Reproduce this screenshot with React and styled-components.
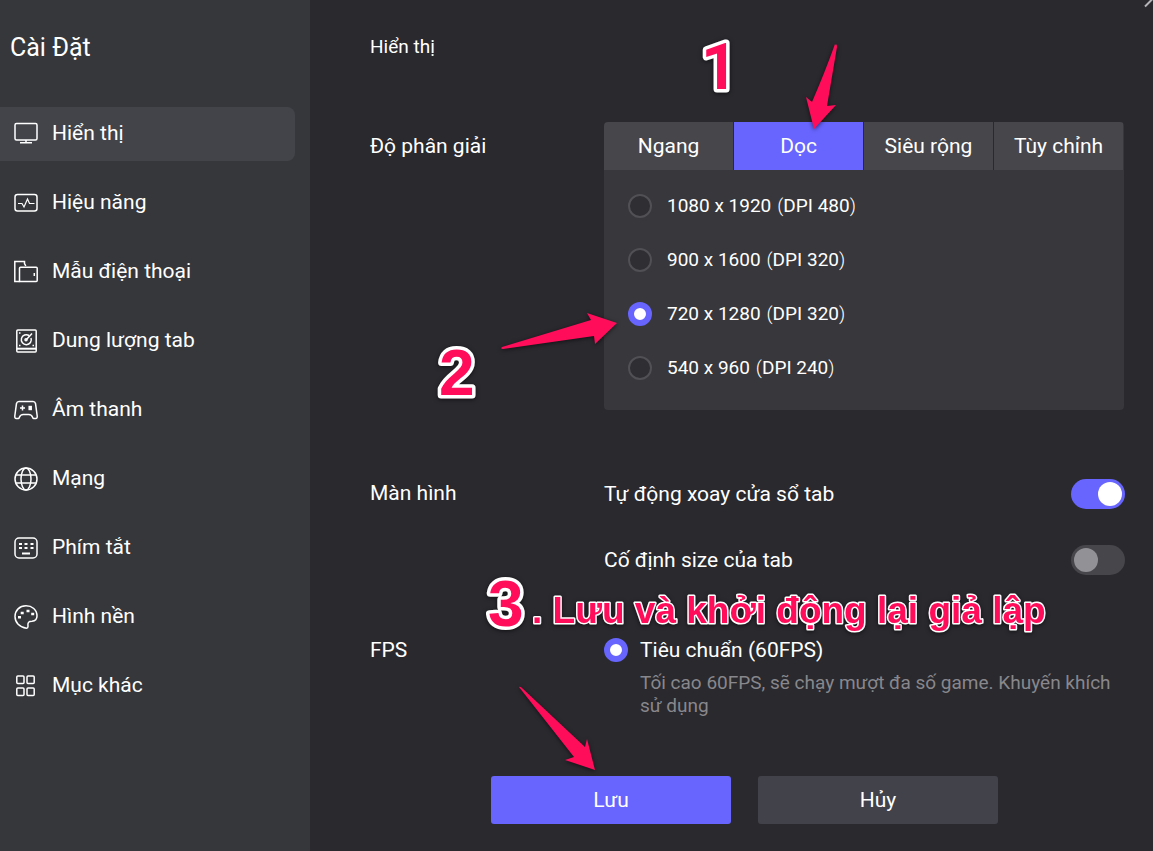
import React, { useState } from "react"
import styled, { createGlobalStyle } from "styled-components"

const GlobalStyle = createGlobalStyle`
  * {
    box-sizing: border-box;
  }

  body {
    margin: 0;
    background: #2a292e;
    color: #fff;
    font-family: Roboto, "Noto Sans", sans-serif;
    font-size: 21px;
    line-height: 24px;
  }

  h1, h2, h3, p, fieldset {
    margin: 0;
    padding: 0;
    border: 0;
    font-weight: 400;
  }

  button, input {
    font: inherit;
    color: inherit;
    margin: 0;
  }
`

const Window = styled.div`
  position: relative;
  display: flex;
  min-height: 100vh;
`

const Sidebar = styled.aside`
  flex: none;
  width: 310px;
  padding-top: 33px;
  background: #36373b;
`

const Title = styled.h1`
  padding-left: 10px;
  margin-bottom: 44px;
  font-size: 25px;
  line-height: 30px;
`

const Menu = styled.nav`
  display: flex;
  flex-direction: column;
  gap: 15px;
  padding-right: 15px;
`

const MenuItem = styled.a`
  display: flex;
  align-items: center;
  gap: 14px;
  height: 54px;
  padding: 0 14px 2px;
  border-radius: 0 8px 8px 0;
  background: ${({ $active }) => ($active ? "#434449" : "transparent")};
  color: #fff;
  text-decoration: none;
`

const Icon = styled.svg`
  flex: none;
  width: 24px;
  height: 24px;
  margin-top: 2px;
  fill: none;
  stroke: #fff;
  stroke-width: 1.5;
`

const Main = styled.main`
  flex: 1;
  min-width: 0;
  padding: 35px 28px 27px 60px;
`

const Heading = styled.h2`
  margin-bottom: 63px;
  font-size: 19px;
`

const Section = styled.section`
  display: grid;
  grid-template-columns: 234px 1fr;
  margin-bottom: ${({ $gap }) => $gap}px;
`

const SectionTitle = styled.h3`
  padding-top: ${({ $top }) => $top || 0}px;
  font-size: 21px;
`

const Panel = styled.div`
  height: 288px;
  margin-right: 1px;
  border-radius: 4px;
  background: #38373b;
  overflow: hidden;
`

const Tabs = styled.div`
  display: grid;
  grid-template-columns: repeat(4, 1fr);
  gap: 1px;
  margin-right: 1px;
  background: #2a292e;
`

const Tab = styled.button`
  height: 48px;
  padding: 0;
  border: 0;
  background: ${({ $active }) => ($active ? "#6765fe" : "#47464b")};
`

const RadioList = styled.fieldset`
  display: flex;
  flex-direction: column;
  gap: 30px;
  padding: 24px;
`

const RadioLabel = styled.label`
  display: flex;
  align-items: center;
  gap: ${({ $gap }) => $gap}px;
`

const Radio = styled.input`
  appearance: none;
  flex: none;
  width: 24px;
  height: 24px;
  border: 2px solid #515055;
  border-radius: 50%;
  background: #2f2e33;

  &:checked {
    border: 6px solid #6765fe;
    background: #fff;
  }
`

const Resolution = styled.span`
  font-size: 19px;
`

const Paren = styled.span`
  display: inline-block;
  width: 12px;
  font-weight: 300;
  text-align: ${({ $align }) => $align};
`

const SwitchList = styled.div`
  display: flex;
  flex-direction: column;
  gap: 36px;
`

const SwitchRow = styled.label`
  display: flex;
  align-items: center;
  justify-content: space-between;
`

const Switch = styled.input`
  appearance: none;
  flex: none;
  display: flex;
  width: 54px;
  height: 30px;
  padding: 3px;
  border-radius: 15px;
  background: #47464b;

  &::before {
    content: "";
    width: 24px;
    height: 24px;
    border-radius: 50%;
    background: #929196;
  }

  &:checked {
    justify-content: flex-end;
    background: #6765fe;
  }

  &:checked::before {
    background: #fff;
  }
`

const Hint = styled.p`
  padding: 9px 0 0 36px;
  color: #88878c;
  font-size: 19px;
  line-height: 23px;
`

const Actions = styled.div`
  display: flex;
  justify-content: center;
  gap: 27px;
  padding-right: 6px;
`

const Button = styled.button`
  width: 240px;
  height: 48px;
  padding: 0;
  border: 0;
  border-radius: 3px;
  background: ${({ $primary }) => ($primary ? "#6765fe" : "#42424a")};
`

const CloseMark = styled.svg`
  position: absolute;
  top: 0;
  right: 0;
  stroke: #b5b4b8;
  stroke-width: 2;
`

const Annotations = styled.svg`
  position: absolute;
  top: 0;
  left: 0;
  pointer-events: none;
  fill: #ff0d5b;
  filter: drop-shadow(0 1px 2px rgba(0, 0, 0, 0.6));
`

const Note = styled.text`
  font-family: ${({ $font }) => $font || '"Liberation Sans"'}, Arial, sans-serif;
  font-size: ${({ $small }) => ($small ? 37 : 64)}px;
  font-weight: 700;
  paint-order: stroke fill;
  stroke: #fff;
  stroke-width: ${({ $small }) => ($small ? 3 : 7)}px;
  stroke-linejoin: round;
`

const icons = {
  display: (
    <>
      <rect x="1" y="1.5" width="22" height="16.5" rx="1.5" />
      <path d="M12 18v3M6 20.8h12" />
    </>
  ),
  performance: (
    <>
      <rect x="1" y="3.5" width="22" height="16.5" rx="2.5" />
      <path d="M4 12.5h4l2 3.5 3.5-8 2 4.5h5" strokeWidth="1.2" />
    </>
  ),
  phone: (
    <>
      <path d="M5.5 21.5H.8V1.500h9.700v2l1.300 2.500" />
      <path d="M5.500 21.500V8.200q0-1 1-1h15.700q1 0 1 1v12.300q0 1-1 1zM20.300 13v3" />
    </>
  ),
  disk: (
    <>
      <rect x="2.8" y="1" width="19.4" height="22" rx="1" />
      <path d="M3 19.7h19" strokeWidth="2" />
      <path d="M12 11l6-6.500M15 6.500a5 5 0 1 0 2 2.500" />
      <circle cx="12" cy="10.8" r="1" />
      <path d="M5 4h1.500M5 16.500h1.500M18.500 16.500H20" />
    </>
  ),
  gamepad: (
    <>
      <path d="M5 3.500h14q2 0 2.500 2l1.700 12.500q.2 2.500-1.500 2.500h-2q-.7 0-1-1-1-3-4-3H9.300q-3 0-4 3-.3 1-1 1h-2q-1.700 0-1.500-2.500L2.500 5.500q.5-2 2.500-2z" />
      <path d="M6 10h5M8.500 7.500v5" />
      <path d="M16.200 7.800v4.400" strokeWidth="3.5" />
    </>
  ),
  globe: (
    <>
      <circle cx="12" cy="12" r="11" />
      <ellipse cx="12" cy="12" rx="5" ry="11" />
      <path d="M2 8h20M2 16h20" />
    </>
  ),
  keyboard: (
    <>
      <rect x="1" y="2" width="22" height="20" rx="4" />
      <path d="M5 8h3M10.500 8h3M16.500 8h3M5 12h3M10.500 12h3M16.500 12h3M8 17.500h8" strokeWidth="2.2" />
    </>
  ),
  palette: (
    <>
      <path d="M12 .8C5.500.8 1 5.500 1 11.500c0 6 4.500 11 11.500 11.700 1.200 0 1.500-.7 1.500-1.700-.5-4 .5-5.300 4-5.300 3.500-.2 5-1.700 5-5.200C23 4.500 18 .8 12 .8z" />
      <path d="M4 12.200h3M6.700 8h3M12.500 6h3M17.200 9h3" strokeWidth="2.6" />
    </>
  ),
  grid: (
    <>
      <rect x="2.8" y="2" width="7.2" height="7.5" rx="1" />
      <rect x="13" y="2" width="7.2" height="7.5" rx="1" />
      <rect x="2.8" y="14" width="7.2" height="7.5" rx="1" />
      <rect x="13" y="14" width="7.2" height="7.5" rx="1" />
    </>
  ),
}

const menu = [
  { icon: "display", label: "Hiển thị" },
  { icon: "performance", label: "Hiệu năng" },
  { icon: "phone", label: "Mẫu điện thoại" },
  { icon: "disk", label: "Dung lượng tab" },
  { icon: "gamepad", label: "Âm thanh" },
  { icon: "globe", label: "Mạng" },
  { icon: "keyboard", label: "Phím tắt" },
  { icon: "palette", label: "Hình nền" },
  { icon: "grid", label: "Mục khác" },
]

const orientations = ["Ngang", "Dọc", "Siêu rộng", "Tùy chỉnh"]

const resolutions = [
  { size: "1080 x 1920", dpi: 480 },
  { size: "900 x 1600", dpi: 320 },
  { size: "720 x 1280", dpi: 320 },
  { size: "540 x 960", dpi: 240 },
]

const App = () => {
  const [orientation, setOrientation] = useState("Dọc")

  return (
    <Window>
      <GlobalStyle />
      <Sidebar>
        <Title>Cài Đặt</Title>
        <Menu>
          {menu.map(({ icon, label }) => (
            <MenuItem key={icon} href={`#${icon}`} $active={icon === "display"}>
              <Icon viewBox="0 0 24 24">{icons[icon]}</Icon>
              {label}
            </MenuItem>
          ))}
        </Menu>
      </Sidebar>

      <Main>
        <Heading>Hiển thị</Heading>

        <Section $gap={69}>
          <SectionTitle $top={12}>Độ phân giải</SectionTitle>
          <Panel>
            <Tabs role="tablist">
              {orientations.map(name => (
                <Tab
                  key={name}
                  role="tab"
                  aria-selected={name === orientation}
                  $active={name === orientation}
                  onClick={() => setOrientation(name)}
                >
                  {name}
                </Tab>
              ))}
            </Tabs>
            <RadioList aria-label="Độ phân giải">
              {resolutions.map(({ size, dpi }) => (
                <RadioLabel key={size} $gap={15}>
                  <Radio
                    type="radio"
                    name="resolution"
                    defaultChecked={size === "720 x 1280"}
                  />
                  <Resolution>
                    {size}
                    <Paren $align="right">(</Paren>DPI {dpi}
                    <Paren $align="left">)</Paren>
                  </Resolution>
                </RadioLabel>
              ))}
            </RadioList>
          </Panel>
        </Section>

        <Section $gap={63}>
          <SectionTitle $top={2}>Màn hình</SectionTitle>
          <SwitchList>
            <SwitchRow>
              Tự động xoay cửa sổ tab
              <Switch type="checkbox" role="switch" defaultChecked />
            </SwitchRow>
            <SwitchRow>
              Cố định size của tab
              <Switch type="checkbox" role="switch" />
            </SwitchRow>
          </SwitchList>
        </Section>

        <Section $gap={59}>
          <SectionTitle>FPS</SectionTitle>
          <div>
            <RadioLabel $gap={12}>
              <Radio type="radio" name="fps" defaultChecked />
              Tiêu chuẩn (60FPS)
            </RadioLabel>
            <Hint>
              Tối cao 60FPS, sẽ chạy mượt đa số game. Khuyến khích sử dụng
            </Hint>
          </div>
        </Section>

        <Actions>
          <Button $primary>Lưu</Button>
          <Button>Hủy</Button>
        </Actions>
      </Main>

      <CloseMark width="10" height="10" viewBox="0 0 10 10">
        <path d="M2 6.5l7-7" />
      </CloseMark>

      <Annotations width="1100" height="800" viewBox="0 0 1100 800">
        <path d="M835 45Q837 43 837 47L827 106 836 105 814 129 806 97 812 102Q825 72 835 44z" />
        <path d="M502 347L591 320 587 313 617 323 595 344 594 336 503 349Q500 349 502 347z" />
        <path d="M519 687Q520 686 522 688L585 747 587 739 595 770 565 760 574 757Z" />
        <Note x="701" y="89" $font="Roboto">1</Note>
        <Note x="439" y="395">2</Note>
        <Note x="488" y="626">3</Note>
        <Note $small x="532" y="623">. Lưu và khởi động lại giả lập</Note>
      </Annotations>
    </Window>
  )
}

export default App
